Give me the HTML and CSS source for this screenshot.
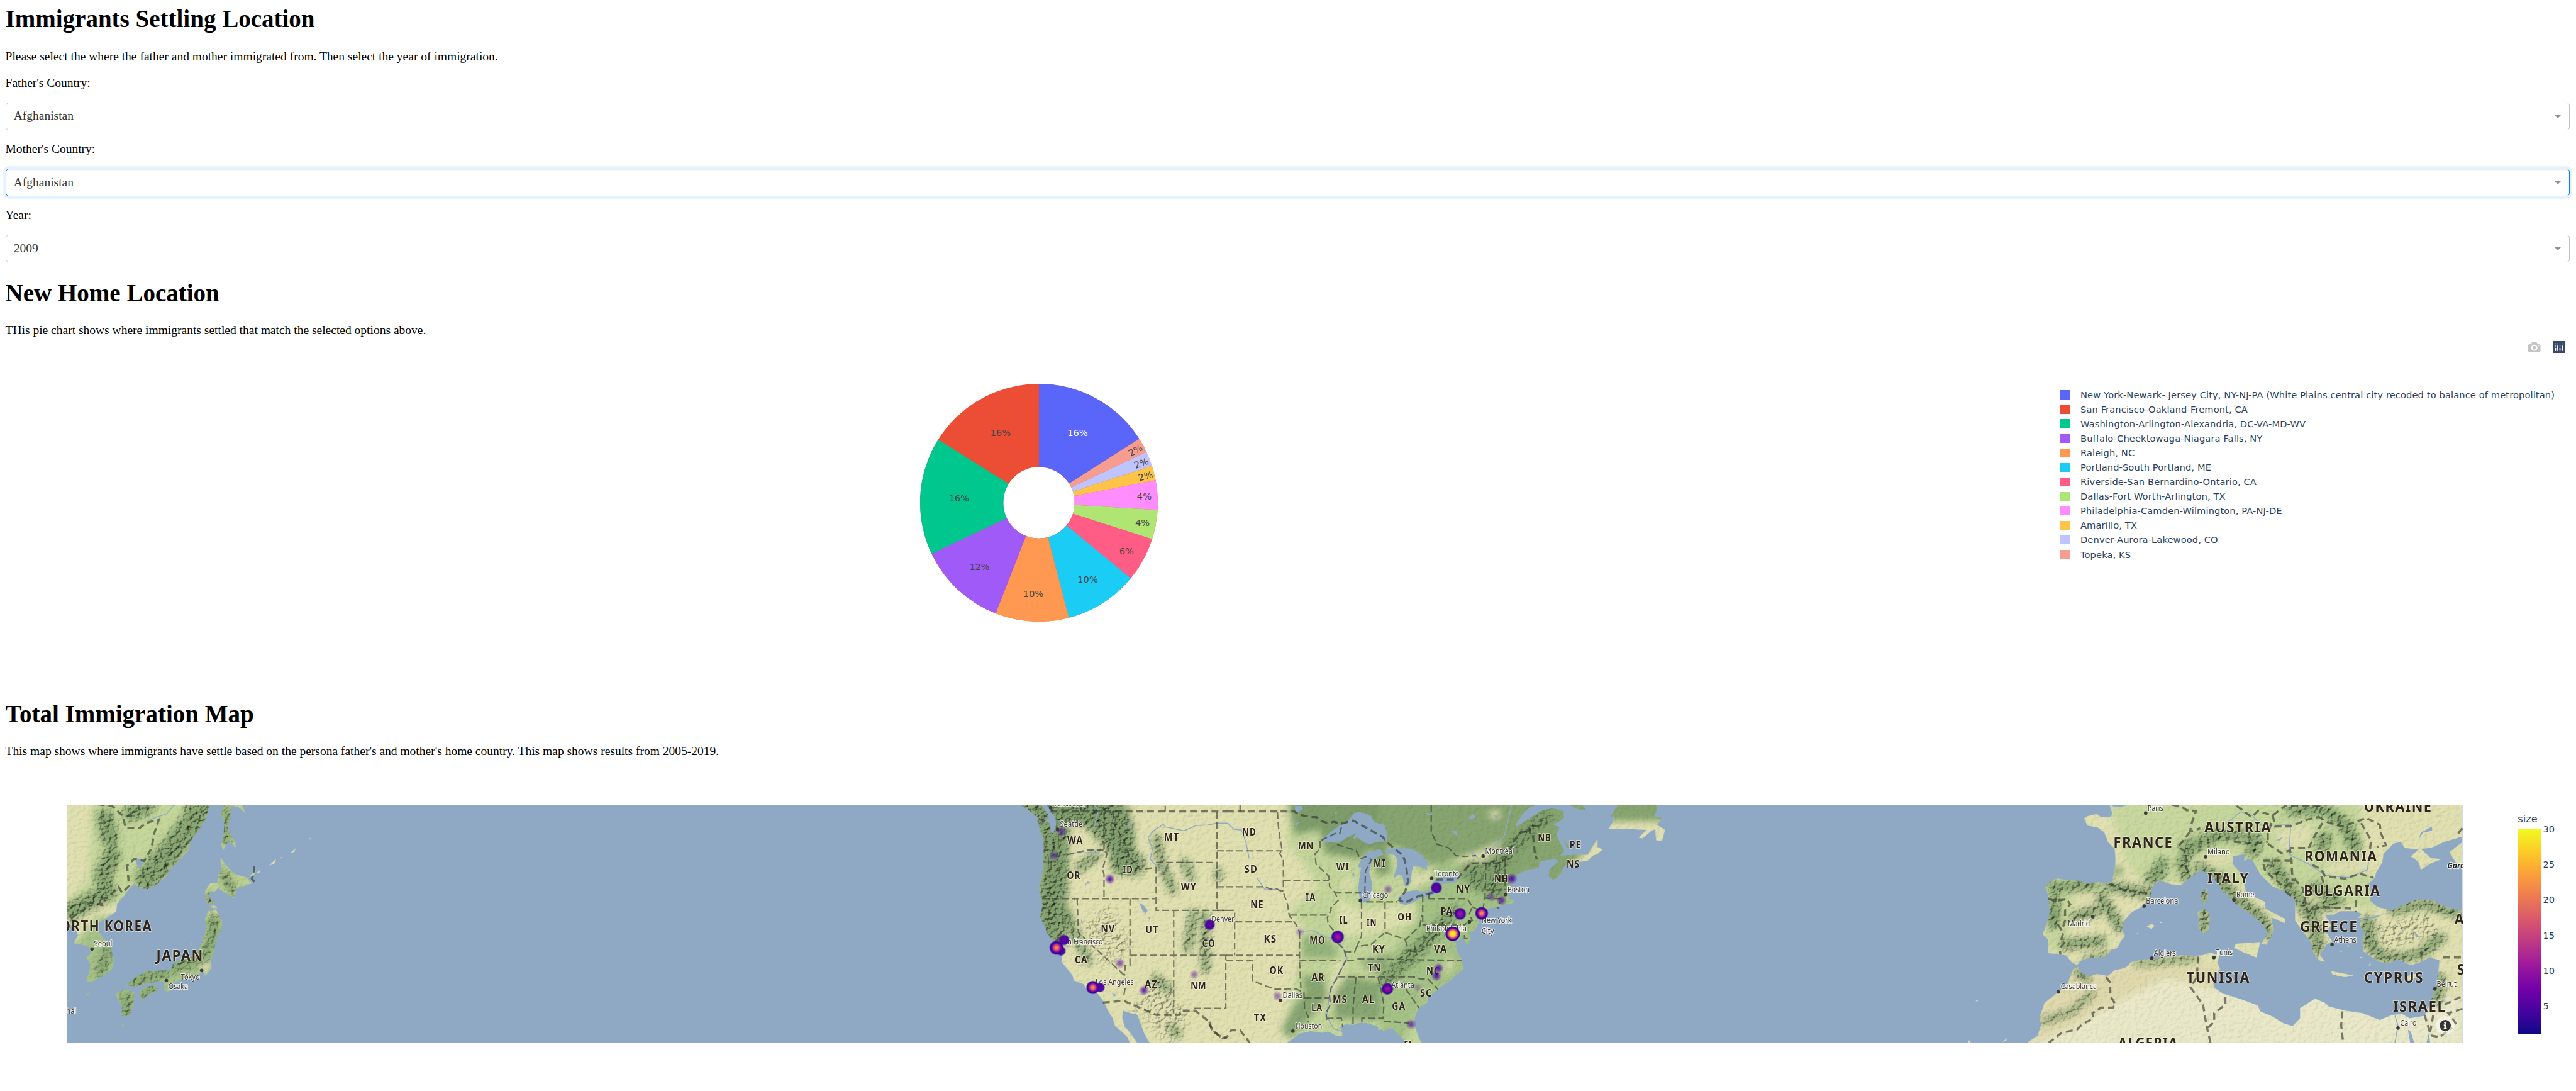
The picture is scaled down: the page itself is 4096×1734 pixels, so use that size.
FILE: index.html
```html
<!DOCTYPE html>
<html lang="en">
<head>
<meta charset="utf-8">
<title>Immigrants Settling Location</title>
<link rel="stylesheet" href="styles.css">
</head>
<body>
<main class="page">
  <h1>Immigrants Settling Location</h1>
  <p>Please select the where the father and mother immigrated from. Then select the year of immigration.</p>
  <p>Father's Country:</p>
  <div class="select"><span>Afghanistan</span><i class="arrow"></i></div>
  <p>Mother's Country:</p>
  <div class="select focused"><span>Afghanistan</span><i class="arrow"></i></div>
  <p>Year:</p>
  <div class="select"><span>2009</span><i class="arrow"></i></div>

  <h1>New Home Location</h1>
  <p class="lead">THis pie chart shows where immigrants settled that match the selected options above.</p>

  <section class="graph pie-graph">
    <div class="modebar">
      <svg viewBox="0 0 1000 1000" width="16" height="16"><path fill="#c4c4c4" transform="matrix(1 0 0 -1 0 850)" d="m500 450c-83 0-150-67-150-150 0-83 67-150 150-150 83 0 150 67 150 150 0 83-67 150-150 150z m400 150h-120c-16 0-34 13-39 29l-31 93c-6 15-23 28-40 28h-340c-16 0-34-13-39-28l-31-94c-6-15-23-28-40-28h-120c-55 0-100-45-100-100v-450c0-55 45-100 100-100h800c55 0 100 45 100 100v450c0 55-45 100-100 100z m-400-550c-138 0-250 112-250 250 0 138 112 250 250 250 138 0 250-112 250-250 0-138-112-250-250-250z m365 380c-19 0-35 16-35 35 0 19 16 35 35 35 19 0 35-16 35-35 0-19-16-35-35-35z"/></svg>
      <svg viewBox="0 0 132 132" width="16" height="16"><rect width="132" height="132" rx="4" fill="#3a4769"/><g fill="#7fd6c0"><circle cx="30" cy="30" r="6"/><circle cx="54" cy="30" r="6"/><circle cx="78" cy="30" r="6"/><circle cx="102" cy="30" r="6"/><circle cx="30" cy="54" r="6"/><circle cx="78" cy="54" r="6"/></g><g fill="#fff"><rect x="24" y="72" width="12" height="36" rx="6"/><rect x="48" y="48" width="12" height="60" rx="6"/><rect x="72" y="72" width="12" height="36" rx="6"/><rect x="96" y="48" width="12" height="60" rx="6"/></g></svg>
    </div>
    <svg class="pie" viewBox="-155 -155 310 310" width="310" height="310">
      <g class="slices" transform="rotate(-90)">
        <circle r="100.75" stroke="#ec4e35"/>
        <circle r="100.75" pathLength="50" stroke="#5a65fa" stroke-dasharray="8 50"/>
        <circle r="100.75" pathLength="50" stroke="#f79d8f" stroke-dasharray="1 50" stroke-dashoffset="-8"/>
        <circle r="100.75" pathLength="50" stroke="#bfc3fe" stroke-dasharray="1 50" stroke-dashoffset="-9"/>
        <circle r="100.75" pathLength="50" stroke="#fec447" stroke-dasharray="1 50" stroke-dashoffset="-10"/>
        <circle r="100.75" pathLength="50" stroke="#ff8dff" stroke-dasharray="2 50" stroke-dashoffset="-11"/>
        <circle r="100.75" pathLength="50" stroke="#aee573" stroke-dasharray="2 50" stroke-dashoffset="-13"/>
        <circle r="100.75" pathLength="50" stroke="#ff5c86" stroke-dasharray="3 50" stroke-dashoffset="-15"/>
        <circle r="100.75" pathLength="50" stroke="#1bcdf4" stroke-dasharray="5 50" stroke-dashoffset="-18"/>
        <circle r="100.75" pathLength="50" stroke="#ff9850" stroke-dasharray="5 50" stroke-dashoffset="-23"/>
        <circle r="100.75" pathLength="50" stroke="#a05af8" stroke-dasharray="6 50" stroke-dashoffset="-28"/>
        <circle r="100.75" pathLength="50" stroke="#00c78e" stroke-dasharray="8 50" stroke-dashoffset="-34"/>
      </g>
      <g class="percent">
        <text x="50.4" y="-87" fill="#fff">16%</text>
        <text x="-50.2" y="-87">16%</text>
        <text x="-104.2" y="-2">16%</text>
        <text x="-77.5" y="87.5">12%</text>
        <text x="-7.4" y="123">10%</text>
        <text x="63.6" y="104.5">10%</text>
        <text x="114.3" y="67.4">6%</text>
        <text x="135" y="30.4">4%</text>
        <text x="137.3" y="-4">4%</text>
        <text transform="translate(125.7 -68.3) rotate(-28.8)" y="4.4">2%</text>
        <text transform="translate(133.3 -51.6) rotate(-21.6)" y="4.4">2%</text>
        <text transform="translate(138.8 -34.8) rotate(-14.4)" y="4.4">2%</text>
      </g>
    </svg>
    <ul class="legend">
      <li><i style="background:#5a65fa"></i>New York-Newark- Jersey City, NY-NJ-PA (White Plains central city recoded to balance of metropolitan)</li>
      <li><i style="background:#ec4e35"></i>San Francisco-Oakland-Fremont, CA</li>
      <li><i style="background:#00c78e"></i>Washington-Arlington-Alexandria, DC-VA-MD-WV</li>
      <li><i style="background:#a05af8"></i>Buffalo-Cheektowaga-Niagara Falls, NY</li>
      <li><i style="background:#ff9850"></i>Raleigh, NC</li>
      <li><i style="background:#1bcdf4"></i>Portland-South Portland, ME</li>
      <li><i style="background:#ff5c86"></i>Riverside-San Bernardino-Ontario, CA</li>
      <li><i style="background:#aee573"></i>Dallas-Fort Worth-Arlington, TX</li>
      <li><i style="background:#ff8dff"></i>Philadelphia-Camden-Wilmington, PA-NJ-DE</li>
      <li><i style="background:#fec447"></i>Amarillo, TX</li>
      <li><i style="background:#bfc3fe"></i>Denver-Aurora-Lakewood, CO</li>
      <li><i style="background:#f79d8f"></i>Topeka, KS</li>
    </ul>
  </section>

  <h1>Total Immigration Map</h1>
  <p class="lead">This map shows where immigrants have settle based on the persona father's and mother's home country. This map shows results from 2005-2019.</p>

  <section class="graph map-graph">
    <svg class="map" viewBox="0 0 3124 310" width="3124" height="310">
      <defs>
        <g id="land">
          <g transform="translate(-87 -148.5) scale(.31888 .30612)">
            <path d="M273,485L857,485L845,540L815,590L785,630L770,680L730,725L700,755L680,790L640,825L600,847L565,835L550,822L530,840L510,870L480,905L475,940L440,965L400,990L395,1015L420,1050L450,1080L465,1140L463,1180L430,1210L375,1240L352,1235L365,1200L370,1160L350,1135L372,1120L365,1090L330,1080L302,1075L320,1040L300,1000L273,995Z"/>
            <path d="M915,485L990,485L1005,523L975,495L945,490L943,540L930,580L945,615L962,645L965,672L950,650L930,645L913,680L905,655L915,610L918,570L905,520Z"/>
            <path d="M902,708L925,745L960,780L1010,795L1030,820L1000,830L970,840L957,883L925,862L890,840L885,850L855,865L860,885L880,900L848,910L838,870L840,850L860,820L890,820L893,780L905,770Z"/>
            <path d="M855,935L885,935L908,975L908,1010L885,1055L875,1115L862,1145L865,1180L840,1215L830,1195L790,1225L745,1230L700,1250L690,1283L670,1275L672,1240L640,1240L590,1250L545,1262L517,1250L560,1215L600,1195L660,1190L700,1190L705,1165L740,1145L790,1130L815,1100L830,1060L845,1010L838,965Z"/>
            <path d="M572,1275L610,1255L648,1258L640,1280L605,1295L585,1316L570,1300ZM475,1290L510,1270L550,1285L550,1315L530,1385L497,1385L500,1345L480,1310ZM350,1293L372,1287L360,1298ZM855,920l15,-8l18,8l-5,12l-14,-8zM780,1078l8,-8l-2,16zM499,1421h8v6h-8zM1100,745l30,-30l-8,20zM1018,790l30,-25l-10,20zM1185,692l26,-22l-8,16zM1262,633l10,-8l-4,8zM1050,775l16,-12l-6,14zM1142,712l14,-6l-8,8z"/>
          </g>
          <g transform="translate(1213 -18.5) scale(.19133 .22321)">
            <path d="M160,83L300,83L345,135L350,165L320,180L285,165L245,135L215,115Z"/>
            <path d="M330,83L360,100L375,130L400,160L405,200L390,240L370,255L365,215L360,190L275,170L290,220L315,280L318,340L318,400L312,470L300,530L285,575L300,620L310,670L295,740L325,790L340,830L365,860L400,885L430,930L445,965L440,1000L475,1035L515,1080L525,1110L590,1130L615,1165L680,1180L715,1215L735,1245L760,1290L790,1330L805,1375L840,1400L890,1440L905,1472L955,1472L905,1410L870,1380L855,1330L858,1285L910,1300L960,1310L970,1340L1005,1420L1040,1472L1580,1472L1580,83Z"/>
          </g>
          <g transform="translate(1488 -18.5) scale(.19133 .22321)">
            <path d="M-20,83H1500V1235L1440,1270L1415,1310L1405,1350L1410,1380L1430,1420L1448,1472L1365,1472L1340,1440L1290,1400L1240,1385L1200,1405L1160,1380L1100,1360L1040,1355L990,1368L940,1365L900,1380L915,1410L920,1435L870,1430L830,1410L780,1415L700,1405L620,1420L580,1450L540,1472L-20,1472Z"/>
          </g>
          <g transform="translate(1713 -18.5) scale(.2551 .22321)">
            <path d="M-10,83H805L760,100L725,140L700,185L690,215L760,165L820,120L880,103L935,120L938,160L910,185L880,195L915,215L900,260L925,320L940,350L920,380L990,375L1060,375L1110,280L1110,330L1135,345L1110,370L1085,380L1060,410L1000,420L940,440L920,490L885,523L860,500L865,460L910,415L900,400L860,405L815,415L810,450L750,465L700,490L670,530L660,570L655,600L662,635L685,640L670,662L640,660L600,678L550,690L500,722L505,770L480,820L455,830L460,870L445,905L430,880L425,850L400,880L385,880L395,930L415,985L425,1040L395,1070L355,1110L300,1155L245,1205L200,1250L180,1300L168,1340L175,1400L210,1472L130,1472L100,1430L60,1390L30,1385L-10,1400Z"/>
            <path d="M965,83L1030,83L1050,112L1010,110ZM1215,83H1410L1415,110L1400,150L1440,160L1415,200L1455,230L1440,295L1410,290L1405,225L1380,240L1340,280L1320,275L1360,230L1280,225L1165,225L1185,190L1200,150L1175,155ZM940,290l12,20l20,28l-20,-8z"/>
          </g>
          <g transform="translate(2463 -18.5) scale(.22321)">
            <path d="M1005,83L970,97L930,97L900,83L915,130L910,152L850,155L825,137L770,150L752,162L770,205L830,215L870,245L890,300L930,340L935,400L930,460L915,530L880,545L830,535L760,540L710,525L650,525L600,513L570,520L523,555L535,590L545,640L550,710L535,770L510,840L540,870L540,950L610,955L650,965L675,1000L710,1020L730,995L770,980L880,970L910,930L945,920L965,880L990,850L972,810L985,760L1030,710L1085,680L1145,620L1145,570L1190,525L1270,550L1320,550L1370,510L1410,480L1445,460L1490,480L1530,530L1568,605V83Z"/>
            <path d="M690,1040L715,1030L730,1060L770,1080L830,1072L890,1082L930,1050L990,1035L1030,1000L1100,985L1150,985L1200,975L1320,962L1410,965L1450,960L1490,945L1540,965L1530,1010L1545,1040L1505,1100L1510,1150L1568,1190V1472H420L480,1430L500,1370L490,1330L520,1240L590,1185L655,1130L675,1070Z"/>
            <path d="M1470,570L1475,620L1455,665L1435,640L1430,600ZM1410,710L1460,690L1487,730L1478,820L1440,835L1420,800L1420,740ZM1118,795L1145,775L1162,790L1145,808ZM1190,768h18l-6,7zM112,1223l20,2l-4,8zM72,1460h14v12h-10zM275,1468l28,-26l-8,20zM1058,835l10,-5l-2,8z"/>
          </g>
          <g transform="translate(2763 -18.5) scale(.32462 .22321)">
            <path d="M50,83H1112V270L1085,280L1040,300L985,335L945,340L985,395L1030,400L985,425L945,462L935,415L905,385L935,345L880,335L865,300L835,310L795,370L790,420L765,480L760,510L735,545L745,600L740,640L770,680L830,700L800,720L740,740L690,745L710,720L680,705L620,705L595,725L560,725L585,790L560,820L590,880L565,900L540,960L560,1000L535,990L510,940L505,890L480,840L440,760L440,640L400,590L350,560L300,490L270,410L255,400L235,410L240,370L190,385L190,430L225,490L245,600L320,650L320,690L400,750L398,775L345,740L355,820L325,900L305,895L330,830L310,780L260,720L195,655L150,580L105,500L65,465Z"/>
            <path d="M1112,300L1060,360L1085,420L1112,450ZM200,895L300,885L285,975L240,950L195,920ZM585,1055L675,1080L640,1090L590,1075ZM885,1085L940,1065L925,1095L895,1105ZM735,1020l10,-18l-4,22zM700,970l12,6l-8,4zM650,900l8,10l-6,2zM620,930l8,12l-5,2z"/>
            <path d="M700,750L760,745L830,695L880,665L930,635L990,640L1040,675L1112,705V1472H100V1190L160,1190L225,1220L290,1255L300,1290L350,1320L395,1360L430,1375L460,1330L460,1270L520,1215L560,1240L575,1260L640,1285L710,1300L780,1340L830,1310L870,1305L900,1330L960,1315L985,1230L1005,1150L1015,1060L1020,990L980,975L940,1005L905,1020L850,985L815,1010L780,1000L750,975L715,940L710,880L720,830L700,790Z"/>
          </g>
        </g>
        <g id="ranges" fill="none" stroke-linecap="round" stroke-linejoin="round">
          <g transform="translate(-87 -148.5) scale(.31888 .30612)">
            <path stroke-width="100" d="M830,440L790,560L700,680L600,800"/>
            <path stroke-width="70" d="M430,540L450,630M600,490L540,520M460,700L420,790L440,860L290,940"/>
            <path stroke-width="34" d="M925,500L930,640M915,780L950,850M855,870V910M875,960L870,1050L830,1140L720,1175L540,1245M440,1100L410,1200M520,1300L515,1380M590,1290L640,1268"/>
          </g>
          <g transform="translate(1213 -18.5) scale(.19133 .22321)">
            <path stroke-width="140" d="M200,60L340,160L390,300L380,560L360,740L410,850M460,120L760,110L860,230L850,420L940,430M620,130L800,300"/>
            <path stroke-width="55" d="M460,710L540,850L620,990M450,140V620M1090,280L1120,420L1200,580M1280,420L1320,500M560,450L680,380M1340,720L1300,920M1420,730V1040M1200,1390L1230,1420M1510,480V500M1080,1100L1170,1160"/>
          </g>
          <g transform="translate(1488 -18.5) scale(.19133 .22321)">
            <path stroke-width="36" d="M75,480V500"/>
            <path stroke-width="80" d="M1210,1100L1350,1000L1480,880L1600,780"/>
          </g>
          <g transform="translate(1713 -18.5) scale(.2551 .22321)">
            <path stroke-width="60" d="M470,450L500,560M620,420L700,300L850,150M580,420V600M380,700L250,860L150,960"/>
          </g>
          <g transform="translate(2463 -18.5) scale(.22321)">
            <path stroke-width="62" d="M560,560L650,560L800,545M900,560L1130,600M580,620L570,780M850,620L960,800M700,740L820,700M640,900L850,880M1350,500L1320,420L1400,320L1560,260M1190,500L1210,420L1140,520M1450,590V650M1450,710V810M720,1060L760,1090"/>
            <path stroke-width="34" d="M510,1350L680,1290L800,1180M760,985L900,960M1060,1010L1400,980"/>
          </g>
          <g transform="translate(2763 -18.5) scale(.32462 .22321)">
            <path stroke-width="56" d="M0,330L120,260L280,270L270,360M350,430L430,600L480,680L520,780L530,930M430,120L560,110L640,200L670,290L680,330M560,270L550,330M60,450L130,520L220,650L300,740L330,840M520,560L610,650L500,700M730,760L740,900L800,980L940,960L1020,860M840,700L960,660L1112,730M1020,1100L1000,1230"/>
          </g>
        </g>
        <mask id="land-mask" maskUnits="userSpaceOnUse" x="0" y="0" width="3124" height="310"><use href="#land" fill="#fff"/></mask>
        <mask id="range-mask" maskUnits="userSpaceOnUse" x="0" y="0" width="3124" height="310"><rect width="3124" height="310" fill="#fff" opacity=".1"/><use href="#ranges" stroke="#fff" filter="url(#soft)"/><path transform="translate(1213 -18.5) scale(.19133 .22321)" fill="none" stroke="#fff" stroke-width="230" opacity=".6" filter="url(#soft-local)" d="M680,720L820,980M1000,1180L1250,1400"/><path transform="translate(2763 -18.5) scale(.32462 .22321)" fill="none" stroke="#fff" stroke-width="140" opacity=".6" d="M780,860L1000,780"/></mask>
        <filter id="soft" filterUnits="userSpaceOnUse" x="-50" y="-50" width="3224" height="410"><feGaussianBlur stdDeviation="4.5"/></filter>
        <filter id="soft-local" filterUnits="userSpaceOnUse" x="300" y="300" width="1300" height="1300"><feGaussianBlur stdDeviation="26"/></filter>
        <filter id="relief" x="0" y="0" width="100%" height="100%" color-interpolation-filters="sRGB"><feTurbulence type="fractalNoise" baseFrequency=".17 .2" numOctaves="3" seed="4"/><feDiffuseLighting lighting-color="#fff" surfaceScale="3" diffuseConstant="1.17"><feDistantLight azimuth="220" elevation="58"/></feDiffuseLighting></filter>
        <radialGradient id="faint"><stop offset="0" stop-color="#5302a3" stop-opacity=".5"/><stop offset=".35" stop-color="#5302a3" stop-opacity=".4"/><stop offset="1" stop-color="#5302a3" stop-opacity="0"/></radialGradient>
        <radialGradient id="mid"><stop offset="0" stop-color="#4c02a1" stop-opacity=".9"/><stop offset=".35" stop-color="#4c02a1" stop-opacity=".7"/><stop offset="1" stop-color="#4c02a1" stop-opacity="0"/></radialGradient>
        <radialGradient id="strong"><stop offset="0" stop-color="#6a00a8"/><stop offset=".5" stop-color="#4c02a1"/><stop offset=".75" stop-color="#3a049a" stop-opacity=".9"/><stop offset="1" stop-color="#3a049a" stop-opacity="0"/></radialGradient>
        <radialGradient id="magenta"><stop offset="0" stop-color="#a01a9c"/><stop offset=".4" stop-color="#8606a6"/><stop offset=".62" stop-color="#4c02a1"/><stop offset=".8" stop-color="#2c0594" stop-opacity=".9"/><stop offset="1" stop-color="#2c0594" stop-opacity="0"/></radialGradient>
        <radialGradient id="hot"><stop offset="0" stop-color="#fb9f3a"/><stop offset=".2" stop-color="#ed7953"/><stop offset=".42" stop-color="#bd3786"/><stop offset=".6" stop-color="#7201a8"/><stop offset=".8" stop-color="#2c0594"/><stop offset=".87" stop-color="#2c0594" stop-opacity=".7"/><stop offset="1" stop-color="#2c0594" stop-opacity="0"/></radialGradient>
        <radialGradient id="peak"><stop offset="0" stop-color="#f0f921"/><stop offset=".35" stop-color="#fcd225"/><stop offset=".5" stop-color="#ed7953"/><stop offset=".62" stop-color="#bd3786"/><stop offset=".74" stop-color="#7201a8"/><stop offset=".87" stop-color="#1b068d"/><stop offset="1" stop-color="#1b068d" stop-opacity="0"/></radialGradient>
      </defs>
      <rect width="3124" height="310" fill="#8fa9c5"/>

      <g mask="url(#land-mask)">
        <rect width="3124" height="310" fill="#e0e0b1"/>
        <g filter="url(#soft)">
          <g transform="translate(-87 -148.5) scale(.31888 .30612)">
            <path fill="#c5d79b" d="M380,440H900V900H400L273,1000V900L360,800Z"/>
            <path fill="#a7c389" d="M400,960H1000V1500H300V1080Z"/>
            <path fill="#b9cf93" d="M880,440H1040V900H880Z"/>
            <circle cx="840" cy="1175" r="20" fill="#e9e0bd"/>
          </g>
          <g transform="translate(1213 -18.5) scale(.19133 .22321)">
            <path fill="#9fb583" d="M260,60H900L960,450L800,480L740,200L500,200L470,620L520,760L440,860L280,860Z"/>
            <path fill="#dfdfb0" d="M560,210H720V330L520,350L500,240ZM400,740L470,860L430,880L395,800Z"/>
          </g>
          <g transform="translate(1488 -18.5) scale(.19133 .22321)">
            <path fill="#c3d59a" d="M570,0H1700V1600H600L560,1250L620,1000L700,860L560,700L760,560L540,300Z"/>
            <path fill="#7f9d6a" d="M540,40H1800V200L1580,480L1450,320L1220,330L1250,480L1150,500L1120,340L1040,400L800,370L760,230L590,260Z"/>
            <path fill="#dde0ae" d="M1380,480L1530,440L1510,560L1400,580ZM880,620L1040,700L1420,660L1440,760L1200,820L1020,850L900,830ZM1000,470L980,580L880,570L950,520ZM870,960L940,1010L880,1180L840,1300L820,1180Z"/>
            <path fill="#87a672" d="M640,1080L790,1080L820,1200L700,1330L560,1450L500,1400L580,1260L660,1180ZM860,1180L960,1080L1180,1120L1240,1280L1400,1340H1200L1000,1340L860,1330ZM1020,1000L1560,880V1080L1200,1090ZM800,930L880,900L860,980Z"/>
            <path fill="#94b47c" d="M1360,880L1600,720V1060L1220,1080ZM640,840L820,860L900,980L640,980Z"/>
          </g>
          <g transform="translate(1713 -18.5) scale(.2551 .22321)">
            <path fill="#a5c286" d="M200,420H700V900L430,1080L200,1280L100,1500H0V1060L180,760Z"/>
            <path fill="#87a56f" d="M-10,40H1500V180H1160L900,560L760,480L640,620L540,600L380,500L420,430L620,320L540,340L380,400L260,430L100,340L-10,300Z"/>
            <path fill="#dfe0b0" d="M410,430L620,290L560,400ZM340,980L380,1000L330,1090ZM150,560L270,430L260,540ZM1160,200H1400L1380,225H1180ZM560,120h50v40h-50z"/>
          </g>
          <g transform="translate(2463 -18.5) scale(.22321)">
            <path fill="#c9d89f" d="M880,40H1700V540H1100L1000,420ZM500,500H900V600H700L640,940H500Z"/>
            <path fill="#7d9d68" d="M930,430L990,480L920,500ZM540,700L620,720L560,790Z"/>
            <path fill="#e0d9ae" d="M480,1030H1560V1180L1200,1110L900,1260L480,1472Z"/>
            <path fill="#e9e9c9" d="M940,1240L1230,1100L1400,1130L1568,1200V1500H400L700,1380Z"/>
            <path fill="#dcdeae" d="M1360,430L1550,400V440L1370,480Z"/>
          </g>
          <g transform="translate(2763 -18.5) scale(.32462 .22321)">
            <path fill="#c5d79c" d="M60,40H700L720,400L760,560V700L400,600L200,400L0,330Z"/>
            <path fill="#dfdfb0" d="M360,220L520,190L490,330L380,340ZM560,430L740,400L750,470L570,500ZM0,400L190,370L210,420L60,440Z"/>
            <path fill="#e9e9c9" d="M-20,1130L120,1160L600,1200H1112V1500H-20Z"/>
          </g>
        </g>
        <use href="#ranges" stroke="#7b9c69" opacity=".8" filter="url(#soft)"/>
        <rect class="relief" width="3124" height="310" filter="url(#relief)" mask="url(#range-mask)"/>
      </g>

      <g class="water">
        <path transform="translate(-87 -148.5) scale(.31888 .30612)" d="M555,715H580L585,735L568,757L558,735Z"/>
        <path transform="translate(1213 -18.5) scale(.19133 .22321)" d="M970,655L1000,670L1028,700L1015,718L995,705ZM780,1180L815,1195L800,1203ZM892,195L908,195L905,225ZM1115,450L1135,455L1125,470ZM600,542h10v7h-10zM616,533h16v10h-16zM1032,740L1046,738L1040,758ZM432,592L446,606L436,612ZM575,750l8,20l-10,2zM524,625h9v16h-8z"/>
        <path transform="translate(1488 -18.5) scale(.19133 .22321)" d="M770,292L840,240L895,205L940,190L1000,130L1040,125L1110,145L1135,185L1205,200L1220,250L1225,295L1150,300L1110,312L1070,305L1020,275L985,285L1010,250L960,270L890,305L850,300L800,300ZM1125,355L1175,340L1200,375L1130,395L1110,440L1100,480L1120,540L1122,600L1105,645L1060,655L1035,625L1025,570L1035,500L1045,450L1020,445L1050,400L1075,365ZM1215,345L1290,330L1400,345L1450,370L1490,410L1508,435L1480,450L1440,430L1400,440L1390,480L1385,530L1370,555L1345,560L1325,500L1300,490L1265,515L1275,480L1290,440L1290,400L1270,375L1215,365ZM1297,625L1310,615L1360,590L1420,580L1470,595L1530,578L1568,560V600L1500,620L1440,630L1420,645L1350,670L1310,660ZM590,90L640,90L650,110L600,130ZM590,195L625,182L605,208ZM985,482L998,478V500L988,500ZM1485,130L1530,140L1525,150ZM860,127h22l-8,10z"/>
        <path transform="translate(1713 -18.5) scale(.2551 .22321)" d="M280,520L310,505L400,490L420,470L410,500L385,535L330,545L265,540ZM120,380L190,370L235,440L240,462L200,445L130,440ZM450,155L475,138L490,155L460,170ZM360,235L395,240L390,265ZM580,145L605,150L598,163ZM385,880L405,885L400,940L420,960L405,970L390,930ZM234,130l16,4l-4,14zM418,280l12,4l-6,8z"/>
        <path transform="translate(2763 -18.5) scale(.32462 .22321)" d="M920,825L936,850L925,862ZM945,245L990,210V235L955,245L937,280ZM362,292L390,272L380,290ZM893,1395L905,1410L918,1472H902ZM978,1410L982,1472H968Z"/>
        <path class="river" d="M1410,43L1417,34L1430,25.500L1433,29L1457,34L1473,27L1488,26.500L1500,24L1514,24L1522,32L1532,33L1538,50L1542,70M1410,43L1416,57L1413,71L1420,79M1552,95L1562,110L1572,110L1586,112M1608,165L1625,164L1640,172L1657,175M1655,172L1665,188L1670,200L1656,225L1647,245L1643,275L1652,292L1665,296M1340,0L1345,8L1340,28M1885,-2L1875,40L1860,56L1847,66M2815,25L2835,9L2850,14L2862,27L2900,26L2898,65L2925,78L2945,92L2975,95L3000,85L3003,65M1312,63L1345,62M3036,275L3040,288L3036,310M1830,60L1841,70M105,21L115,17L130,12L141,0"/>
      </g>

      <g class="borders">
        <g class="country">
          <path transform="translate(-87 -148.5) scale(.31888 .30612)" d="M400,483L460,492L500,530L515,585H570L600,562L650,548L630,610L620,670L590,725L550,715L520,745L528,830L500,860L485,835L440,882L415,885V912L370,900L340,935L280,975M1038,745L1040,775L1030,800L1050,825"/>
          <path transform="translate(1213 -18.5) scale(.19133 .22321)" d="M365,122H1568M285,168L350,182M722,1238L865,1228L1085,1310H1245L1255,1285H1350L1440,1345L1470,1405L1530,1440L1568,1445"/>
          <path transform="translate(1488 -18.5) scale(.19133 .22321)" d="M130,122H590L620,140L700,155L740,155L770,178L820,190L860,182L905,195L990,175L1190,270L1225,305L1330,380L1350,430L1365,530L1345,590L1305,640L1345,655L1440,615L1568,590M10,1350L30,1400L100,1445L130,1440L160,1400L220,1400L285,1472"/>
          <path transform="translate(1713 -18.5) scale(.2551 .22321)" d="M285,520H390L460,425H615L640,395L680,300L720,240L765,245L760,205L800,207L825,200M780,260L790,370L800,400"/>
          <path transform="translate(2463 -18.5) scale(.22321)" d="M1265,83L1320,95L1350,115L1405,120L1380,190L1370,240L1430,220M1370,240L1300,330L1350,360L1340,430L1370,500M900,543L980,580L1145,603M540,630L580,645L650,635L670,665L640,700L640,760L630,790L600,785L630,830L615,880L635,890L610,920L612,955M880,1090L903,1120L905,1200L935,1250L920,1268H850L800,1300L805,1330L740,1365L710,1395L620,1415L545,1472"/>
          <path transform="translate(2763 -18.5) scale(.32462 .22321)" d="M205,90L265,155L290,120L350,145L400,90H550L530,150L570,185L630,210L690,180L725,160L780,200L785,250L805,320L770,330M350,145L360,210L420,210L490,170L530,155M550,190L520,260L495,335H420M705,190L745,290L740,350M345,190L330,250V310L385,365L420,350L425,400L430,530M195,300L270,310L330,300M425,410H310L320,470L400,570M510,435L545,460L560,500L640,515L700,485L755,510M545,500L560,560M400,560L440,520L470,570L480,640L490,710L540,680L680,690M685,640V710M400,590L440,630M1035,975L1112,975M1040,1250L1112,1200M1112,1275L1055,1300L1090,1370M960,1310L985,1430L1020,1440L1070,1385M995,1310L980,1430M630,1290L625,1370L633,1472M160,1205V1250L115,1300V1350L90,1385M50,970L45,1090L20,1150L70,1250L85,1380L100,1472M1112,220L1095,250"/>
        </g>
        <g class="state">
          <path transform="translate(1213 -18.5) scale(.19133 .22321)" d="M730,125V340L750,370L720,460L730,490V632M480,375L620,347H745M308,632H1085M547,632L555,830L870,1080L880,1120L865,1200M907,632V1020L875,1020L870,1080M1085,445V700H1568M790,125L800,200L870,300L900,380L975,460L1085,450M1085,420H1500M1500,125V700M1500,352h68M1500,562h68M1147,90V122M1205,700V1305M907,962H1568M1345,1272H1560V965"/>
          <path transform="translate(1488 -18.5) scale(.19133 .22321)" d="M62,700H183V962M125,352H510M125,562H390L425,575L465,572L515,595L545,670L555,730L600,780L625,825M220,83V122M475,125L480,200L490,270L505,340L490,370L515,400V560L510,590M515,527H825M765,292L765,340L730,370L738,430L825,500L830,560L865,595L890,640L835,690L840,700L815,740L820,780L860,820L885,890L930,930L945,985L905,1050L885,1090L840,1150L830,1200L835,1250L805,1300L810,1340M865,598H1045M560,727H810M188,767H580M125,962H625M625,825V993L635,1160M625,993H905M125,993H305V1110L390,1140L460,1160L600,1158L655,1180L660,1280L685,1320V1350M660,1210H825M810,1330H910L920,1380M890,1088H1400L1450,1100H1500L1568,1160M1010,1090L990,1260V1365M1160,1090L1185,1180L1200,1250L1195,1330H1050V1355M1200,1348L1370,1358M1350,1160L1440,1270M950,993H1015M1020,983L1568,990L1730,992M1048,650V850L1015,910L1110,900L1210,828M1080,650H1290M1208,650V830M1465,610V785M1210,830L1350,870L1445,790L1460,730M1345,870L1370,935L1300,985M1370,935L1430,945L1480,925L1510,865L1568,840M770,292L870,250H900L915,200M880,315L1010,350L1040,400L1080,385L1115,405L1075,470L1070,600M930,940L1000,945L1015,910"/>
          <path transform="translate(1713 -18.5) scale(.2551 .22321)" d="M260,83V240L290,315L350,335L385,380L430,385L490,380M638,400V580M610,430L605,500L575,580M540,425L535,620L527,680M540,580H625M527,628L610,632V660M245,632H445L470,680L455,720L470,760L440,775L430,785H215M470,680L510,700M430,785V865H455M248,600V632M595,680L608,690"/>
        </g>
      </g>

      <g class="city-dots">
        <circle cx="33" cy="188"/><circle cx="130" cy="229"/><circle cx="176" cy="216"/>
        <circle cx="1283" cy="4"/><circle cx="1292" cy="32"/><circle cx="1583" cy="255"/><circle cx="1599" cy="295"/><circle cx="1687" cy="125"/><circle cx="1780" cy="96"/><circle cx="1847" cy="67"/><circle cx="1876" cy="117"/><circle cx="1829" cy="153"/>
        <circle cx="2711" cy="11"/><circle cx="2642" cy="146"/><circle cx="2709" cy="132"/><circle cx="2719" cy="200"/><circle cx="2597" cy="244"/><circle cx="2789" cy="68"/><circle cx="2826" cy="124"/><circle cx="2800" cy="199"/><circle cx="2954" cy="182"/><circle cx="3088" cy="240"/><circle cx="3040" cy="291"/>
      </g>

      <g class="labels">
        <g transform="translate(-87 -148.5) scale(.31888 .30612)">
          <g font-size="61" class="bold asia"><text x="199" y="1024" textLength="424">NORTH KOREA</text><text x="639" y="1150" textLength="194">JAPAN</text></g>
          <g font-size="34" class="place asia"><text x="385" y="1089" textLength="74">Seoul</text><text x="740" y="1230" textLength="77">Tokyo</text><text x="689" y="1271" textLength="80">Osaka</text><text x="187" y="1375" textLength="125">Shanghai</text></g>
        </g>
        <g transform="translate(1213 -18.5) scale(.19133 .22321)">
          <g font-size="56" class="bold"><text x="480" y="309" textLength="108">WA</text><text x="476" y="517" textLength="96">OR</text><text x="858" y="485" textLength="70">ID</text><text x="1139" y="292" textLength="104">MT</text><text x="1254" y="583" textLength="108">WY</text><text x="709" y="830" textLength="96">NV</text><text x="1012" y="832" textLength="90">UT</text><text x="1399" y="913" textLength="91">CO</text><text x="531" y="1008" textLength="88">CA</text><text x="1008" y="1151" textLength="88">AZ</text><text x="1321" y="1159" textLength="108">NM</text></g>
          <g font-size="46" class="place"><text x="385" y="92" textLength="222">Vancouver</text><text x="430" y="213" textLength="154">Seattle</text><text x="430" y="899" textLength="292">San Francisco</text><text x="672" y="1132" textLength="260">Los Angeles</text></g>
        </g>
        <g transform="translate(1488 -18.5) scale(.19133 .22321)">
          <g font-size="56" class="bold"><text x="234" y="262" textLength="98">ND</text><text x="250" y="481" textLength="90">SD</text><text x="291" y="685" textLength="91">NE</text><text x="382" y="887" textLength="88">KS</text><text x="420" y="1072" textLength="97">OK</text><text x="314" y="1345" textLength="88">TX</text><text x="615" y="344" textLength="109">MN</text><text x="667" y="646" textLength="69">IA</text><text x="693" y="896" textLength="110">MO</text><text x="706" y="1113" textLength="92">AR</text><text x="706" y="1289" textLength="76">LA</text><text x="876" y="466" textLength="90">WI</text><text x="1130" y="448" textLength="83">MI</text><text x="896" y="778" textLength="60">IL</text><text x="1082" y="793" textLength="71">IN</text><text x="1293" y="760" textLength="99">OH</text><text x="1121" y="947" textLength="90">KY</text><text x="1091" y="1055" textLength="94">TN</text><text x="851" y="1241" textLength="101">MS</text><text x="1051" y="1241" textLength="88">AL</text><text x="1255" y="1282" textLength="94">GA</text><text x="1447" y="1203" textLength="83">SC</text><text x="1336" y="1506" textLength="68">FL</text></g>
          <g font-size="46" class="place"><text x="25" y="768" textLength="155">Denver</text><text x="510" y="1210" textLength="135">Dallas</text><text x="597" y="1391" textLength="182">Houston</text><text x="1055" y="626" textLength="174">Chicago</text><text x="1251" y="1152" textLength="156">Atlanta</text></g>
        </g>
        <g transform="translate(1713 -18.5) scale(.2551 .22321)">
          <g font-size="56" class="bold"><text x="805" y="297" textLength="70">NB</text><text x="966" y="337" textLength="63">PE</text><text x="952" y="451" textLength="68">NS</text><text x="582" y="535" textLength="74">NH</text><text x="389" y="598" textLength="72">NY</text><text x="308" y="727" textLength="63">PA</text><text x="274" y="948" textLength="68">VA</text><text x="235" y="1074" textLength="69">NC</text></g>
          <g font-size="46" class="place"><text x="536" y="371" textLength="148">Montréal</text><text x="277" y="500" textLength="125">Toronto</text><text x="650" y="594" textLength="112">Boston</text><text x="517" y="774" textLength="154">New York</text><text x="517" y="836" textLength="64">City</text><text x="234" y="823" textLength="207">Philadelphia</text></g>
        </g>
        <g transform="translate(2463 -18.5) scale(.22321)">
          <g font-size="84" class="bold"><text x="923" y="332" textLength="348">FRANCE</text><text x="950" y="1504" textLength="352">ALGERIA</text></g>
          <g font-size="46" class="place"><text x="1122" y="119" textLength="92">Paris</text><text x="656" y="793" textLength="130">Madrid</text><text x="1113" y="659" textLength="187">Barcelona</text><text x="1159" y="964" textLength="129">Algiers</text><text x="615" y="1160" textLength="210">Casablanca</text></g>
        </g>
        <g transform="translate(2763 -18.5) scale(.32462 .22321)">
          <g font-size="84" class="bold"><text x="75" y="243" textLength="271">AUSTRIA</text><text x="88" y="541" textLength="168">ITALY</text><text x="478" y="414" textLength="293">ROMANIA</text><text x="475" y="617" textLength="309">BULGARIA</text><text x="459" y="826" textLength="234">GREECE</text><text x="4" y="1123" textLength="256">TUNISIA</text><text x="717" y="1123" textLength="240">CYPRUS</text><text x="833" y="1290" textLength="213">ISRAEL</text><text x="716" y="125" textLength="275">UKRAINE</text><text x="1081" y="780" textLength="275">ARMENIA</text><text x="1090" y="1074" textLength="180">SYRIA</text></g>
          <g font-size="46" class="place"><text x="88" y="374" textLength="90">Milano</text><text x="204" y="624" textLength="72">Rome</text><text x="597" y="886" textLength="89">Athens</text><text x="122" y="961" textLength="67">Tunis</text><text x="1009" y="1144" textLength="79">Beirut</text><text x="862" y="1373" textLength="66">Cairo</text><text x="1051" y="453" textLength="125" class="park">Gorodok</text></g>
        </g>
      </g>

      <g class="heat">
        <circle cx="1298" cy="35" r="7" fill="url(#mid)" opacity=".75"/><circle cx="1287.600" cy="66.300" r="7" fill="url(#mid)" opacity=".65"/><circle cx="1360.300" cy="97" r="7" fill="url(#mid)"/>
        <circle cx="1300.600" cy="176.400" r="7.500" fill="url(#strong)"/><circle cx="1296.500" cy="190.500" r="6.800" fill="url(#strong)"/><circle cx="1290.700" cy="186.400" r="9.800" fill="url(#hot)"/>
        <circle cx="1373.300" cy="206.500" r="7" fill="url(#mid)" opacity=".7"/><circle cx="1347.500" cy="238.200" r="6.800" fill="url(#strong)"/><circle cx="1338.100" cy="238.200" r="9.200" fill="url(#hot)"/>
        <circle cx="1404.900" cy="242" r="7" fill="url(#mid)" opacity=".9"/><circle cx="1470.300" cy="221.500" r="6.500" fill="url(#faint)"/><circle cx="1490.400" cy="156.500" r="7.500" fill="url(#strong)"/>
        <circle cx="1607.600" cy="166" r="6.500" fill="url(#faint)" opacity=".7"/><circle cx="1657.300" cy="172.300" r="9" fill="url(#magenta)"/><circle cx="1579" cy="249.400" r="6.500" fill="url(#faint)"/><circle cx="1723" cy="110.300" r="6.500" fill="url(#faint)"/>
        <circle cx="1786" cy="108.300" r="8" fill="url(#strong)"/><circle cx="1722.200" cy="240" r="8.200" fill="url(#magenta)"/><circle cx="1753" cy="286.200" r="7" fill="url(#mid)" opacity=".8"/><circle cx="1761.600" cy="238.200" r="6" fill="url(#faint)" opacity=".6"/>
        <circle cx="1884.400" cy="96.500" r="7.500" fill="url(#mid)"/><circle cx="1857" cy="120" r="6.500" fill="url(#faint)"/><circle cx="1871.200" cy="124.800" r="7" fill="url(#mid)" opacity=".85"/><circle cx="1845.100" cy="141.500" r="9" fill="url(#hot)"/><circle cx="1817.100" cy="142.200" r="8.300" fill="url(#magenta)"/>
        <circle cx="1788.800" cy="213.200" r="7" fill="url(#mid)"/><circle cx="1786" cy="223.200" r="7" fill="url(#mid)"/><circle cx="1807.400" cy="168.300" r="10" fill="url(#peak)"/>
      </g>

      <g class="info" transform="translate(3101.600 287.800)"><circle r="12" fill="#fff" opacity=".5"/><circle r="7.300" fill="#333"/><circle cy="-3.600" r="1.500" fill="#f4f4e4"/><path d="M-2,-1.300H1.300V3.200H2V5H-2V3.200H-1.200V.4H-2Z" fill="#f4f4e4"/></g>
    </svg>
    <div class="colorbar">
      <h2>size</h2>
      <div class="scale">
        <div class="gradient"></div>
        <ol class="ticks"><li>30</li><li>25</li><li>20</li><li>15</li><li>10</li><li>5</li></ol>
      </div>
    </div>
  </section>
</main>
<script src="map.js"></script>
</body>
</html>
```
FILE: map.js
```js
// Fit the label glyphs, not only their spacing, to each label's width.
document.querySelectorAll('.labels text').forEach(function (label) {
  label.setAttribute('lengthAdjust', 'spacingAndGlyphs');
});
```
FILE: styles.css
```css
html { overflow: hidden; background: #fff; }
body { margin: 0; }

.page {
  zoom: 1.21941;
  display: flow-root;
  height: 1422px;
  box-sizing: border-box;
  padding: 6px 8px 0 7px;
  font-family: "Liberation Serif", "Times New Roman", serif;
  font-size: 16px;
  line-height: 18.4px;
  color: #000;
  overflow: hidden;
}

.page > h1 { margin: 21.2px 0 21.6px; font-size: 32px; line-height: 37px; font-weight: bold; }
.page > h1:first-child { margin-top: 0; }
.page > p { margin: 16px 0; }
.page > .lead { margin-bottom: 0; }

.select {
  display: flex;
  align-items: center;
  justify-content: space-between;
  box-sizing: border-box;
  height: 36px;
  padding: 0 10px;
  border: 1px solid #c0c0c0;
  border-radius: 4px;
  background: #fff;
  color: #333;
}
.select.focused {
  border-color: #007eff;
  box-shadow: inset 0 1px 1px rgba(0, 0, 0, .075), 0 0 0 3px rgba(0, 126, 255, .1);
}
.arrow {
  border: 5px solid transparent;
  border-top-color: #909090;
  border-bottom-width: 0;
}

.graph {
  position: relative;
  display: flex;
  align-items: flex-start;
  font-family: "DejaVu Sans", Verdana, sans-serif;
  color: #2a3f5f;
}
.pie-graph { height: 450px; }
.modebar { position: absolute; top: 4px; right: 6px; display: flex; gap: 16px; }
.modebar svg { display: block; }
.pie { flex: none; margin: 60px 0 0 1192.5px; }
.slices circle { fill: none; stroke-width: 108.5; }
.percent { font-size: 12px; text-anchor: middle; fill: #444; }

.legend {
  list-style: none;
  margin: 65px 0 0 1177.3px;
  padding: 0;
  font-size: 12px;
  letter-spacing: .1px;
  line-height: 18.9px;
  white-space: nowrap;
}
.legend li { display: flex; align-items: center; height: 18.9px; }
.legend i { width: 12px; height: 12px; margin-right: 14px; }

.map-graph { height: 434px; }
.map { flex: none; margin: 60px 0 0 80px; }
.relief { mix-blend-mode: multiply; }
.water { fill: #8fa9c5; }
.river { fill: none; stroke: #8fa9c5; stroke-width: 1.2px; }
.borders { fill: none; stroke: #34372d; stroke-opacity: .62; }
.borders path { vector-effect: non-scaling-stroke; }
.country path { stroke-width: 2.8px; stroke-dasharray: 9 5; }
.state path { stroke-width: 1.8px; stroke-dasharray: 9 4; }
.city-dots circle { r: 2.3px; fill: #3b3b3b; }
.labels { font-family: "Noto Sans", "Open Sans", sans-serif; stroke-linejoin: round; }
.labels text { paint-order: stroke; }
.labels .bold { font-weight: 700; letter-spacing: .07em; fill: #2f241e; stroke: rgba(247, 245, 225, .6); stroke-width: 8px; }
.labels .place { fill: #3f3835; stroke: rgba(250, 250, 245, .8); stroke-width: 9px; }
.labels .asia { stroke-width: 6px; }
.labels .park { font-weight: 700; font-style: italic; fill: #222; }

.colorbar { margin: 67px 0 0 72px; }
.colorbar h2 { margin: 0; font-size: 13.3px; font-weight: 400; line-height: 25px; }
.scale { display: flex; }
.gradient {
  width: 30px;
  height: 268px;
  background: linear-gradient(to top, #0d0887, #46039f 11.1%, #7201a8 22.2%, #9c179e 33.3%, #bd3786 44.4%, #d8576b 55.6%, #ed7953 66.7%, #fb9f3a 77.8%, #fdca26 88.9%, #f0f921);
}
.ticks { list-style: none; margin: -9px 0 0 3px; padding: 0; font-size: 12px; }
.ticks li { height: 46.2px; line-height: 18px; }
```
